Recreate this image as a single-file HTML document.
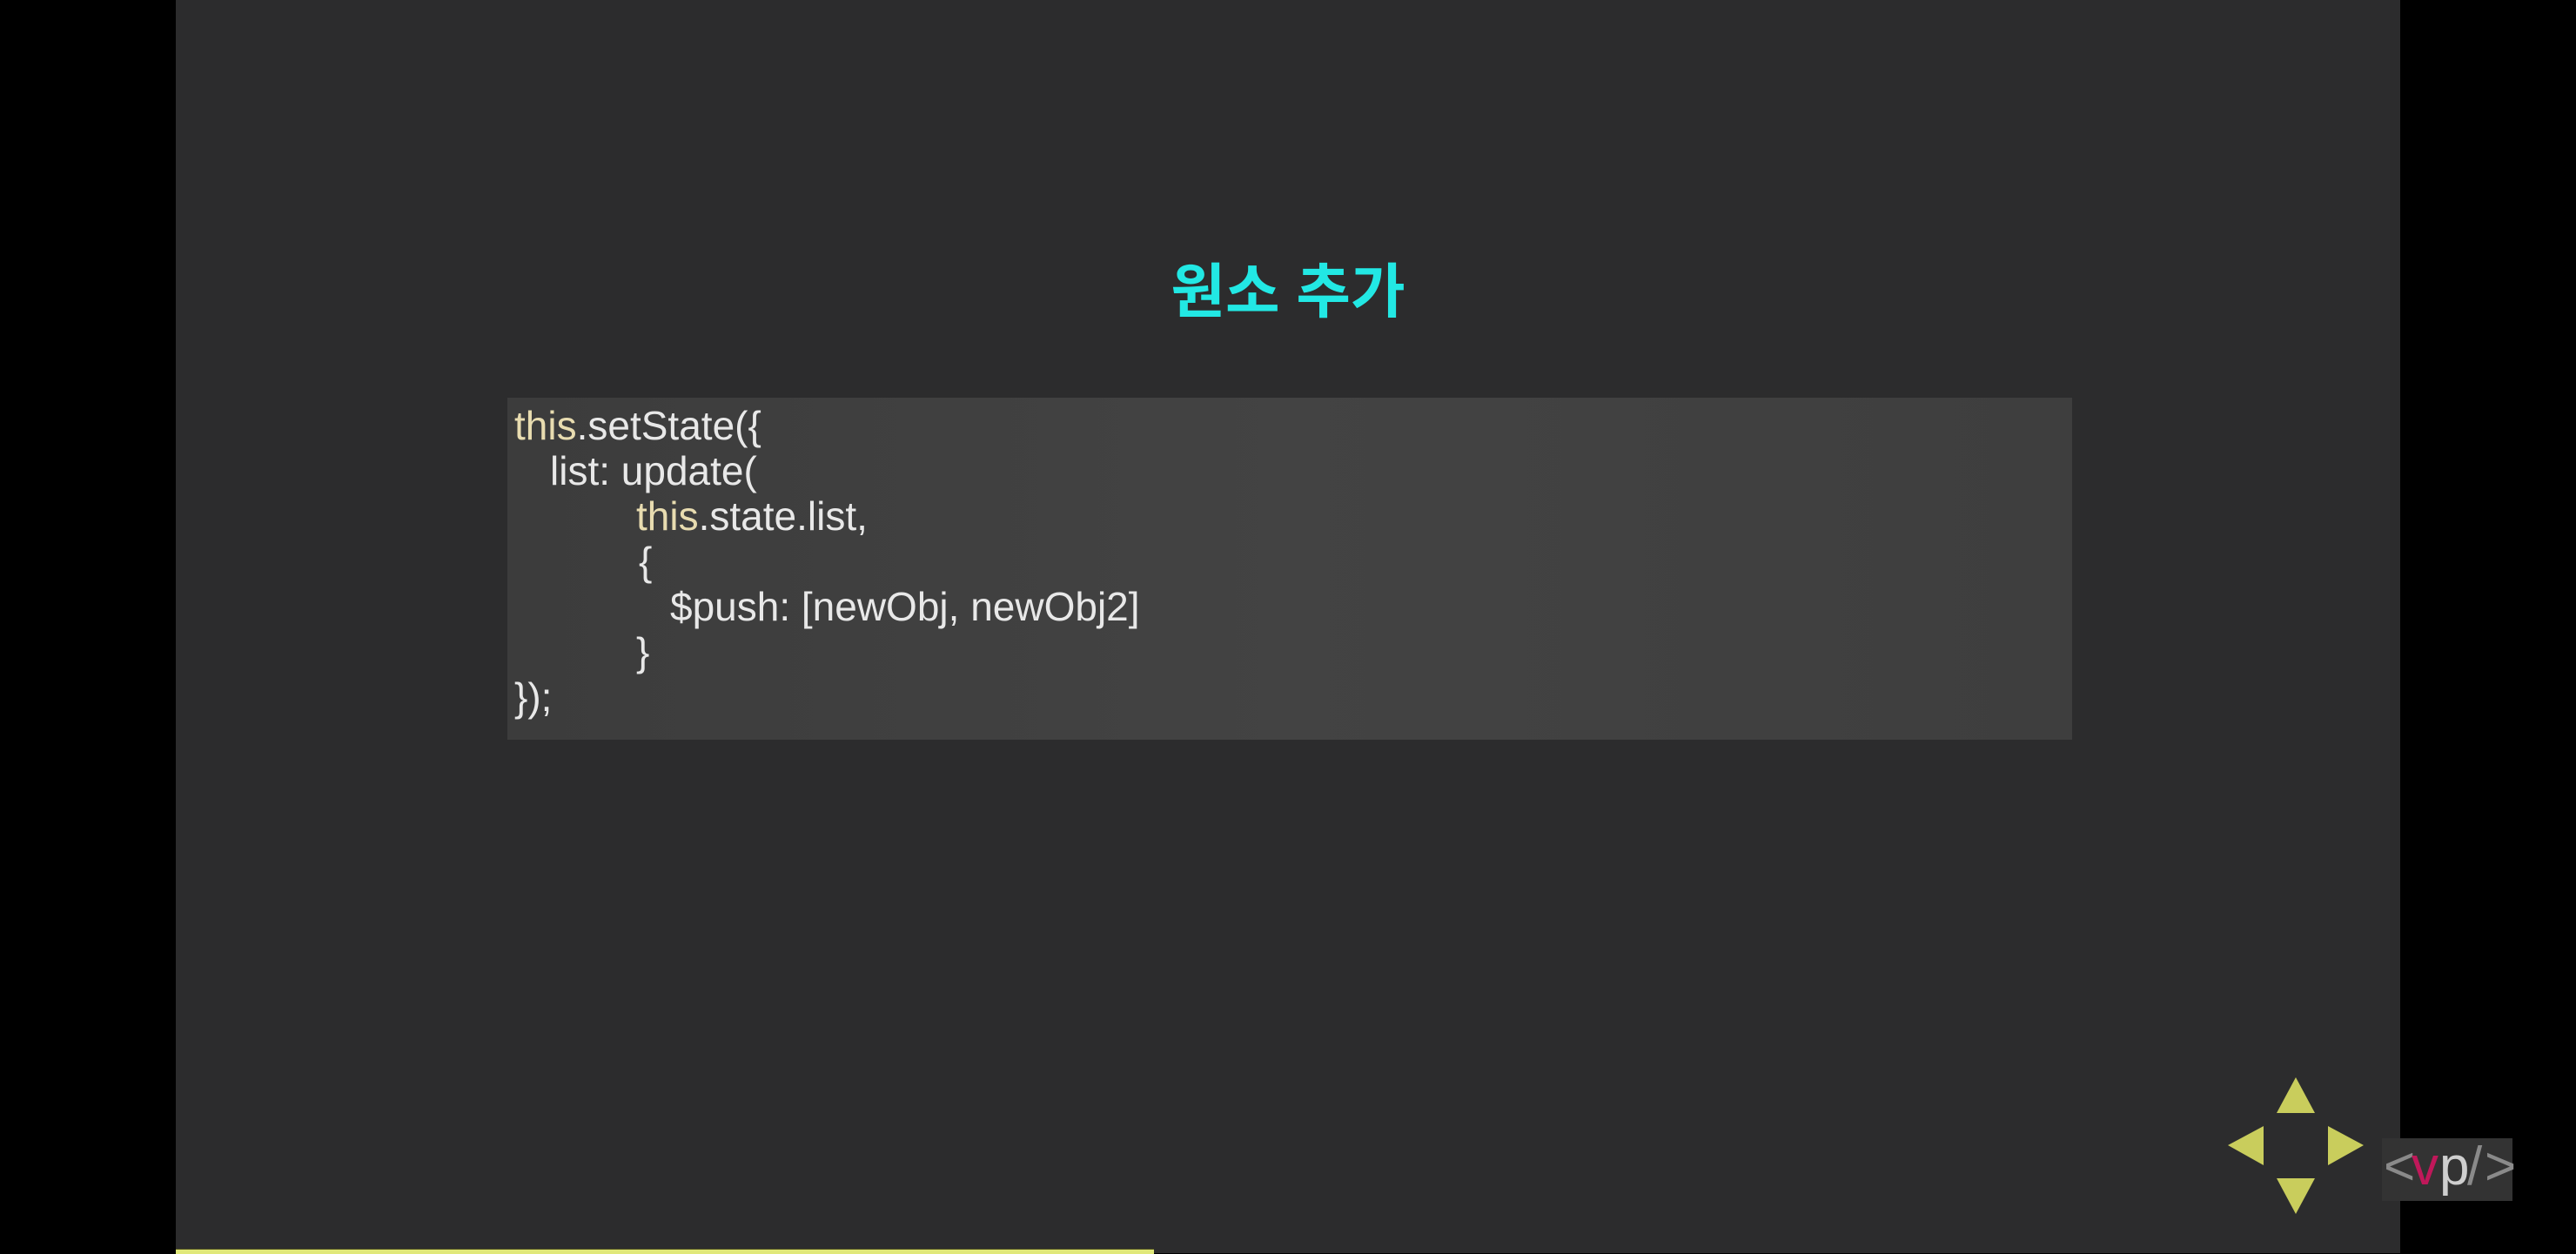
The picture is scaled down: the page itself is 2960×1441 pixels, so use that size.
<!DOCTYPE html>
<html><head><meta charset="utf-8"><style>
html,body{margin:0;padding:0;width:2960px;height:1440px;background:#000;overflow:hidden}
.slide{position:absolute;left:202px;top:0;width:2556px;height:1440px;background:#2c2c2d}
.title{position:absolute;left:0;top:288px;width:2960px;text-align:center;font-family:"Liberation Sans","Noto Sans CJK KR",sans-serif;font-size:68px;font-weight:bold;color:#22e8e4;line-height:96px}
.code{position:absolute;left:583px;top:457px;width:1798px;height:393px;background:linear-gradient(90deg,#3c3c3c,#434343 50%,#3e3e3e)}
.ln{position:absolute;font-family:"Liberation Sans",sans-serif;font-size:46px;color:#e8e8e8;white-space:pre;line-height:52px;letter-spacing:0}
.y{color:#e8dcb0}
.bar{position:absolute;left:202px;top:1435px;width:1124px;height:5px;background:#e0e87a;border-top:1px solid #55581f}
.logo{position:absolute;left:2737px;top:1308px;width:150px;height:72px;background:#333}
.logo span{font-family:"Liberation Sans",sans-serif;font-size:62px;line-height:66px}
</style></head><body>
<div class="slide"></div>
<div class="title">원소 추가</div>
<div class="code"></div>
<div class="ln" style="left:591px;top:463px"><span class="y">this</span>.setState({</div>
<div class="ln" style="left:632px;top:515px">list: update(</div>
<div class="ln" style="left:731px;top:567px"><span class="y">this</span>.state.list,</div>
<div class="ln" style="left:734px;top:619px">{</div>
<div class="ln" style="left:770px;top:671px">$push: [newObj, newObj2]</div>
<div class="ln" style="left:731px;top:723px">}</div>
<div class="ln" style="left:591px;top:775px">});</div>
<div class="bar"></div>
<svg style="position:absolute;left:2550px;top:1230px" width="180" height="175">
<g fill="#c9cd5c">
<polygon points="66,8 110,8 88,49" transform="rotate(180 88 28.5)"/>
<polygon points="10,86 51,64 51,109"/>
<polygon points="125,64 166,86 125,109"/>
<polygon points="66,124 110,124 88,165"/>
</g></svg>
<div class="logo"><span style="position:absolute;left:2px;top:0;color:#8a8a8a">&lt;</span><span style="position:absolute;left:34px;top:0;color:#c0185a">v</span><span style="position:absolute;left:66px;top:0;color:#cfcfcf">p</span><span style="position:absolute;left:98px;top:0;color:#8a8a8a">/</span><span style="position:absolute;left:118px;top:0;color:#8a8a8a">&gt;</span></div>
</body></html>
